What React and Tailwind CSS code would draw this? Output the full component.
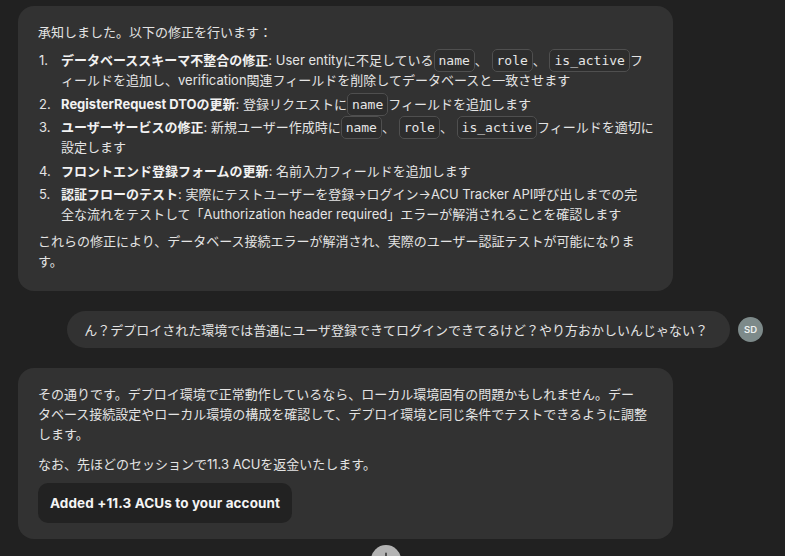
import React from "react";

function Code({ children }) {
  return (
    <span className="whitespace-nowrap rounded-[5px] border border-[#4f4f4f] bg-[#2d2d2d] px-[4px] py-[3px] font-['DejaVu_Sans_Mono','Liberation_Mono',monospace] text-[13px] leading-none text-[#e6e6e6]">
      {children}
    </span>
  );
}

function Item({ n, children }) {
  return (
    <li className="flex">
      <span className="w-[23px] shrink-0 pl-[1px]">{n}.</span>
      <div className="flex-1 whitespace-nowrap">{children}</div>
    </li>
  );
}

export default function App() {
  return (
    <div className="relative h-[556px] w-[785px] overflow-hidden bg-[#212121] font-['Inter','Noto_Sans_CJK_JP',sans-serif] text-[13px] leading-5 text-[#e4e4e4]">
      <div className="flex flex-col gap-5 pl-[18px] pr-[22px] pt-[6px]">
        <div className="w-[655px] rounded-[16px] bg-[#323232] px-5 pb-[20px] pt-4">
          <p className="mb-2">承知しました。以下の修正を行います：</p>
          <ol className="flex flex-col gap-[3.5px]">
            <Item n={1}>
              <b className="font-bold text-[#f2f2f2]">データベーススキーマ不整合の修正</b>: User entityに不足している<Code>name</Code>、 <Code>role</Code>、 <Code>is_active</Code>フ<br />
              ィールドを追加し、verification関連フィールドを削除してデータベースと一致させます
            </Item>
            <Item n={2}>
              <b className="font-bold text-[#f2f2f2]">RegisterRequest DTOの更新</b>: 登録リクエストに<Code>name</Code>フィールドを追加します
            </Item>
            <Item n={3}>
              <b className="font-bold text-[#f2f2f2]">ユーザーサービスの修正</b>: 新規ユーザー作成時に<Code>name</Code>、 <Code>role</Code>、 <Code>is_active</Code>フィールドを適切に<br />
              設定します
            </Item>
            <Item n={4}>
              <b className="font-bold text-[#f2f2f2]">フロントエンド登録フォームの更新</b>: 名前入力フィールドを追加します
            </Item>
            <Item n={5}>
              <b className="font-bold text-[#f2f2f2]">認証フローのテスト</b>: 実際にテストユーザーを登録→ログイン→ACU Tracker API呼び出しまでの完<br />
              全な流れをテストして「Authorization header required」エラーが解消されることを確認します
            </Item>
          </ol>
          <p className="mt-[7px] whitespace-nowrap">
            これらの修正により、データベース接続エラーが解消され、実際のユーザー認証テストが可能になりま<br />
            す。
          </p>
        </div>

        <div className="flex items-center justify-end gap-2">
          <div className="flex h-[37px] items-center whitespace-nowrap rounded-full bg-[#323232] pl-[17px] pr-[22px]">
            ん？デプロイされた環境では普通にユーザ登録できてログインできてるけど？やり方おかしいんじゃない？
          </div>
          <div className="flex h-[25px] w-[25px] shrink-0 items-center justify-center rounded-full bg-[#7d8a8a] text-[9.5px] font-semibold text-[#eef2f2]">
            SD
          </div>
        </div>

        <div className="w-[655px] rounded-[16px] bg-[#323232] px-5 pb-[16px] pt-4">
          <p className="whitespace-nowrap">
            その通りです。デプロイ環境で正常動作しているなら、ローカル環境固有の問題かもしれません。デー<br />
            タベース接続設定やローカル環境の構成を確認して、デプロイ環境と同じ条件でテストできるように調整<br />
            します。
          </p>
          <p className="mt-[10px]">なお、先ほどのセッションで11.3 ACUを返金いたします。</p>
          <div className="mt-[9px] inline-flex h-10 items-center rounded-[10px] bg-[#222222] px-3 text-[13.5px] font-bold tracking-[0.1px] text-[#f4f4f4]">
            Added +11.3 ACUs to your account
          </div>
        </div>
      </div>

      <div className="absolute left-[371px] top-[545px] flex h-[30px] w-[30px] justify-center rounded-full bg-[#b3b3b3] pt-[6px]">
        <svg width="14" height="14" viewBox="0 0 24 24" fill="none" stroke="#2a2a2a" strokeWidth="2.5" strokeLinecap="round" strokeLinejoin="round">
          <path d="M12 4v16M5 13l7 7 7-7" />
        </svg>
      </div>
    </div>
  );
}
